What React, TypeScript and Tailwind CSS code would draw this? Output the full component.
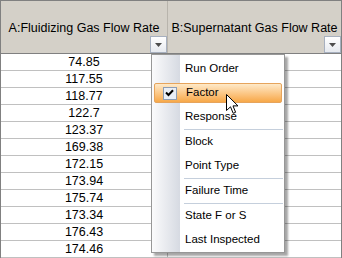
const colA = ['74.85', '117.55', '118.77', '122.7', '123.37', '169.38', '172.15', '173.94', '175.74', '173.34', '176.43', '174.46'];
const colB = ['212.4', '208.9', '215.3', '210.6', '219.2', '230.1', '228.7', '226.4', '231.8', '229.5', '233.2', '231.05'];

const menuItems: (string | null)[] = [
  'Run Order',
  'Factor',
  'Response',
  null,
  'Block',
  'Point Type',
  null,
  'Failure Time',
  null,
  'State F or S',
  'Last Inspected',
];

const DropButton = () => (
  <div className="absolute right-0 bottom-0 w-[17px] h-[17px] border border-[#a7b0bf] bg-[linear-gradient(to_bottom,#ffffff,#e6e9ef)] flex items-center justify-center">
    <svg width="7" height="4" viewBox="0 0 7 4">
      <path d="M0 0H7L3.5 4Z" fill="#4d4d4d" />
    </svg>
  </div>
);

const Cursor = () => (
  <svg className="absolute left-[225px] top-[93px]" width="13" height="21" viewBox="0 0 13 21">
    <path
      d="M0.5 0.5V16.5L4.5 12.8L7.2 19.3L9.6 18.3L7 11.9H12Z"
      fill="#fff"
      stroke="#000"
      strokeWidth="1"
      strokeLinejoin="miter"
    />
  </svg>
);

export default function App() {
  return (
    <div
      className="relative w-[342px] h-[258px] overflow-hidden bg-white border-l border-r border-t border-[#808080] text-black"
      style={{ fontFamily: '"Liberation Sans", Arial, sans-serif' }}
    >
      {/* header */}
      <div className="grid grid-cols-[167px_1fr] h-[53px] bg-[#d4d0c8] border-b border-[#808080]">
        <div className="relative flex items-center justify-center pt-[3px] border-r border-[#b8b4ac] text-[12.5px] whitespace-nowrap overflow-hidden">
          A:Fluidizing Gas Flow Rate
          <DropButton />
        </div>
        <div className="relative flex items-center justify-center pt-[3px] text-[12.5px] whitespace-nowrap overflow-hidden">
          B:Supernatant Gas Flow Rate
          <DropButton />
        </div>
      </div>

      {/* rows */}
      <div>
        {colA.map((v, i) => (
          <div key={i} className="grid grid-cols-[167px_1fr] h-[17px] border-b border-[#c0c0c0] text-[12.5px] leading-[16px]">
            <div className="text-center border-r border-[#c0c0c0]">{v}</div>
            <div className="text-center">{colB[i]}</div>
          </div>
        ))}
      </div>

      {/* context menu */}
      <div className="absolute left-[150px] top-[53px] w-[134px] pt-[2px] bg-[linear-gradient(to_right,#fbfbfc_0px,#d6dae2_28px,#ffffff_28px)] border border-[#979797] shadow-[3px_3px_2px_rgba(0,0,0,0.35)] text-[11.5px]">
        {menuItems.map((item, i) =>
          item === null ? (
            <div key={i} className="ml-[32px] mr-[1px] h-px bg-[#c5cfdc]" />
          ) : item === 'Factor' ? (
            <div key={i} className="h-[24px] py-[2px] px-[2px]">
              <div className="h-[20px] flex items-center rounded-[2px] border border-[#e6a45c] bg-[linear-gradient(to_bottom,#fee9c8,#fbc27c_60%,#f7a848)]">
                <div className="w-[29px] flex justify-center">
                  <div className="w-[14px] h-[13px] border border-[#8c9db5] bg-[#e9eef6] flex items-center justify-center">
                    <svg width="9" height="8" viewBox="0 0 9 8">
                      <path d="M1 3.5L3.5 6L8 1.2" fill="none" stroke="#000" strokeWidth="2" />
                    </svg>
                  </div>
                </div>
                <span className="pl-[2px]">{item}</span>
              </div>
            </div>
          ) : (
            <div key={i} className="h-[24px] flex items-center pl-[33px]">
              {item}
            </div>
          )
        )}
      </div>

      <Cursor />
    </div>
  );
}
